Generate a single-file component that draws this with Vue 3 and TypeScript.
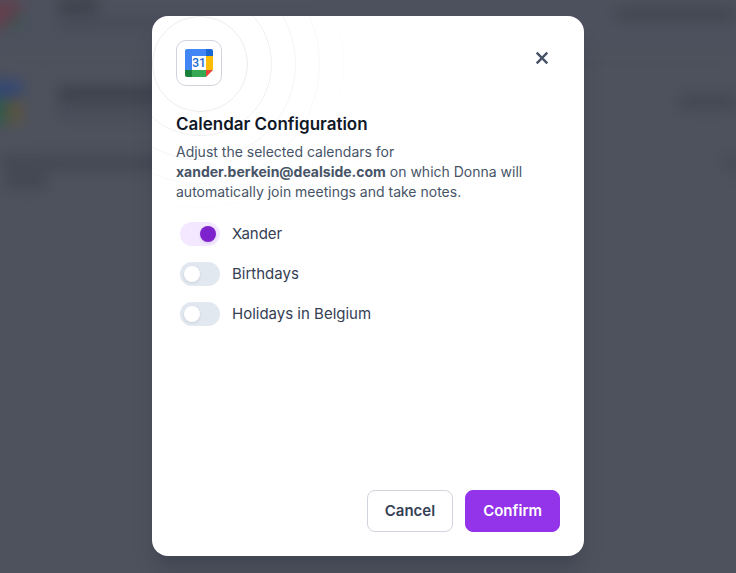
<script setup lang="ts">
import { reactive, ref } from 'vue'

interface Calendar {
  id: string
  name: string
  enabled: boolean
}

const email = 'xander.berkein@dealside.com'
const open = ref(true)
const calendars = reactive<Calendar[]>([
  { id: 'xander', name: 'Xander', enabled: true },
  { id: 'birthdays', name: 'Birthdays', enabled: false },
  { id: 'holidays', name: 'Holidays in Belgium', enabled: false },
])
const rings = [48, 72, 96, 120, 144]

function close(): void {
  open.value = false
}
</script>

<template>
  <div class="screen">
    <div class="page" aria-hidden="true">
      <div class="row row-top">
        <span class="logo logo-mail"></span>
        <span class="lines"><i class="bar short"></i><i class="bar faint"></i></span>
        <span class="bar status wide"></span>
      </div>
      <div class="row row-account">
        <span class="logo logo-calendar"></span>
        <span class="lines"><i class="bar"></i><i class="bar faint"></i></span>
        <span class="bar status"></span>
      </div>
      <div class="row row-note">
        <span class="lines"><i class="bar note"></i><i class="bar tail"></i></span>
        <span class="bar status tiny"></span>
      </div>
    </div>

    <main v-if="open" class="modal" role="dialog" aria-modal="true" aria-labelledby="title">
      <svg class="rings" viewBox="0 0 288 288" fill="none" aria-hidden="true">
        <circle v-for="r in rings" :key="r" cx="144" cy="144" :r="r - 0.5" />
      </svg>

      <header class="top">
        <span class="app-icon">
          <svg viewBox="0 0 28 28" width="28" height="28" aria-hidden="true">
            <path fill="#4285f4" d="M2 0h19v7H7v14H0V2a2 2 0 0 1 2-2Z" />
            <path fill="#1967d2" d="M21 0h5a2 2 0 0 1 2 2v5h-7Z" />
            <path fill="#fbbc04" d="M21 7h7v14h-7Z" />
            <path fill="#34a853" d="M7 21h14v7H7Z" />
            <path fill="#188038" d="M0 21h7v7H2a2 2 0 0 1-2-2Z" />
            <path fill="#ea4335" d="M21 21h7l-7 7Z" />
            <path fill="#fff" d="M7 7h14v14H7Z" />
            <text x="14" y="18" text-anchor="middle">31</text>
          </svg>
        </span>
        <button class="close" type="button" aria-label="Close" @click="close">
          <svg viewBox="0 0 24 24" width="24" height="24" aria-hidden="true">
            <path d="m6.7 6.7 10.6 10.6m0-10.6L6.7 17.3" />
          </svg>
        </button>
      </header>

      <h1 id="title">Calendar Configuration</h1>
      <p class="intro">
        Adjust the selected calendars for <strong>{{ email }}</strong> on which Donna will
        automatically join meetings and take notes.
      </p>

      <ul class="calendars">
        <li v-for="calendar in calendars" :key="calendar.id">
          <input :id="calendar.id" v-model="calendar.enabled" class="toggle" type="checkbox" role="switch" />
          <label :for="calendar.id">{{ calendar.name }}</label>
        </li>
      </ul>

      <footer class="actions">
        <button class="button secondary" type="button" @click="close">Cancel</button>
        <button class="button primary" type="button" @click="close">Confirm</button>
      </footer>
    </main>
  </div>
</template>

<style>
body {
  margin: 0;
  background: #4e525d;
}
</style>

<style scoped>
.screen {
  position: relative;
  display: grid;
  place-items: center;
  box-sizing: border-box;
  min-height: 100vh;
  padding: 16px 16px 17px;
  overflow: hidden;
  font-family: Inter, "Liberation Sans", sans-serif;
}

.page {
  position: absolute;
  inset: 0;
  filter: blur(7px);
}

.row {
  display: flex;
  align-items: center;
  box-sizing: border-box;
}

.row-top {
  height: 52px;
  padding-bottom: 24px;
  background: #4c515d;
}

.row-account {
  height: 100px;
}

.row-note {
  align-items: flex-start;
  padding-top: 4px;
}

.logo {
  flex: none;
  width: 38px;
  height: 44px;
  margin: 0 36px 0 -16px;
}

.logo-mail {
  height: 28px;
  background: linear-gradient(135deg, #623f4d 64%, #3c5550 78%);
}

.logo-calendar {
  background:
    linear-gradient(#34477400, #344774 0) top / 100% 42% no-repeat,
    linear-gradient(90deg, #31594d 58%, #5b543f 62%);
}

.lines {
  display: grid;
  gap: 4px;
  width: 260px;
}

.bar {
  height: 16px;
  background: #3e424d;
}

.faint {
  height: 12px;
  background: #474b57;
}

.short {
  width: 40px;
}

.note {
  height: 14px;
  background: #434752;
}

.tail {
  width: 40px;
  height: 14px;
  margin-left: 6px;
  background: #424651;
}

.status {
  width: 56px;
  height: 14px;
  margin-left: auto;
  background: #434752;
}

.wide {
  width: 120px;
}

.tiny {
  width: 10px;
}

.modal {
  position: relative;
  display: flex;
  flex-direction: column;
  box-sizing: border-box;
  width: 100%;
  max-width: 432px;
  padding: 24px;
  overflow: hidden;
  background: #fff;
  border-radius: 16px;
  box-shadow: 0 20px 24px -4px rgb(16 24 40 / 14%), 0 8px 8px -4px rgb(16 24 40 / 8%);
}

.rings {
  position: absolute;
  top: -96px;
  left: -96px;
  width: 288px;
  height: 288px;
  stroke: #eaecf0;
  mask-image: radial-gradient(circle, #000 24%, transparent 78%);
}

.top {
  position: relative;
  display: flex;
  justify-content: space-between;
  align-items: flex-start;
  margin-bottom: 24px;
}

.app-icon {
  display: grid;
  place-items: center;
  box-sizing: border-box;
  width: 46px;
  height: 46px;
  background: #fff;
  border: 1px solid #d0d5dd;
  border-radius: 10px;
}

.app-icon text {
  fill: #1967d2;
  font-family: Roboto, sans-serif;
  font-size: 12px;
  font-weight: 500;
}

.close {
  display: grid;
  place-items: center;
  width: 36px;
  height: 36px;
  padding: 0;
  background: none;
  border: 0;
  cursor: pointer;
}

.close path {
  fill: none;
  stroke: #475467;
  stroke-width: 2.4;
}

h1 {
  position: relative;
  margin: 0 0 4px;
  color: #101828;
  font-size: 17px;
  font-weight: 600;
  line-height: 28px;
}

.intro {
  position: relative;
  max-width: 352px;
  margin: 0 0 20px;
  color: #475467;
  font-size: 14px;
  line-height: 20px;
}

.calendars {
  display: flex;
  flex-direction: column;
  gap: 16px;
  min-height: 244px;
  margin: 0 0 24px;
  padding: 0 4px;
  list-style: none;
}

.calendars li {
  display: flex;
  align-items: center;
  gap: 12px;
  color: #344054;
  font-size: 15px;
  line-height: 24px;
}

.toggle {
  display: flex;
  flex: none;
  align-items: center;
  box-sizing: border-box;
  width: 40px;
  height: 24px;
  margin: 0;
  padding: 4px;
  appearance: none;
  background: #e2e8f0;
  border-radius: 12px;
  cursor: pointer;
}

.toggle::before {
  width: 16px;
  height: 16px;
  content: "";
  background: #fff;
  border-radius: 50%;
  box-shadow: 0 1px 3px rgb(16 24 40 / 12%);
}

.toggle:checked {
  justify-content: flex-end;
  background: #f3e8ff;
}

.toggle:checked::before {
  background: #7e22ce;
}

.actions {
  display: flex;
  justify-content: flex-end;
  gap: 12px;
}

.button {
  box-sizing: border-box;
  height: 42px;
  padding: 0 17px;
  border: 1px solid #d0d5dd;
  border-radius: 8px;
  font-family: inherit;
  font-size: 15px;
  font-weight: 600;
  line-height: 24px;
  cursor: pointer;
}

.secondary {
  color: #344054;
  background: #fff;
}

.primary {
  color: #fff;
  background: #9333ea;
  border-color: #9333ea;
}
</style>
